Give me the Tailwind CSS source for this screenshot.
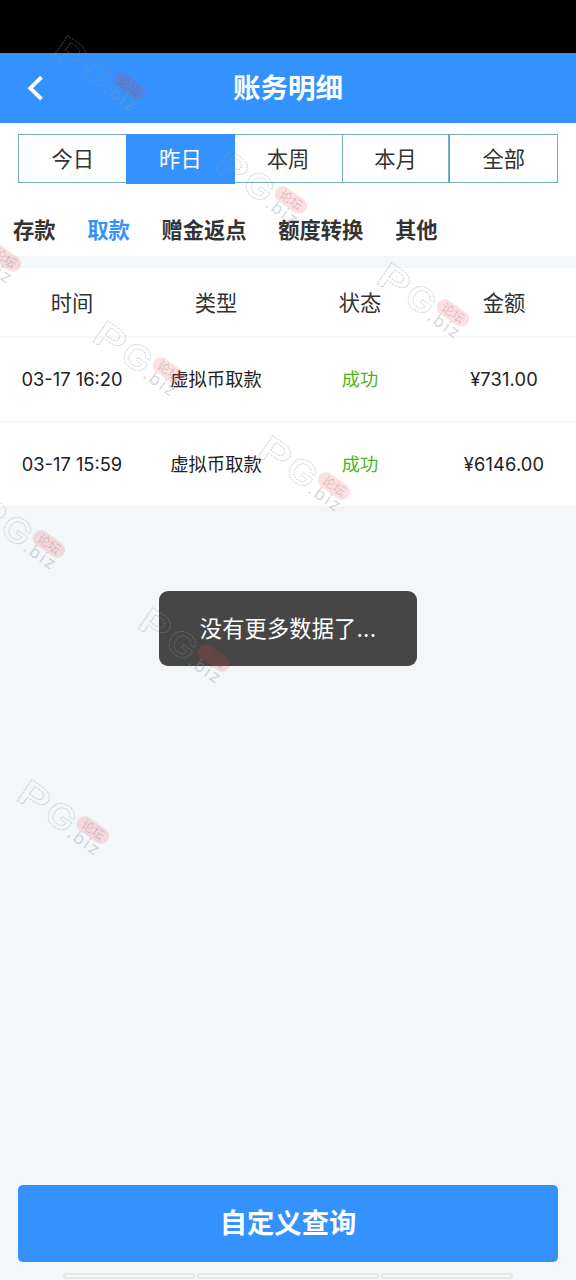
<!DOCTYPE html>
<html lang="zh-CN">
<head>
<meta charset="utf-8">
<title>账务明细</title>
<script src="https://cdn.jsdelivr.net/npm/@tailwindcss/browser@4"></script>
</head>
<body class="relative flex h-[1280px] w-[576px] flex-col overflow-hidden bg-[#f3f7fa] font-['Inter','Noto_Sans_CJK_SC',sans-serif] text-[#333]">
  <div class="h-[53px] shrink-0 bg-black"></div>
  <header class="grid h-[70px] shrink-0 grid-cols-[72px_1fr_72px] items-center bg-[#3492ff] text-white">
    <svg class="ml-[26px] h-7 w-5" viewBox="0 0 20 28" fill="none" stroke="currentColor" stroke-width="3.8"><path d="M15.5 3.2 4.3 14.2 15.5 25.2"/></svg>
    <h1 class="text-center text-[27.5px] leading-[70px] font-bold">账务明细</h1>
  </header>
  <section class="h-[133px] shrink-0 bg-white pt-[11px]">
    <nav class="mx-[18px] grid h-[49px] grid-cols-5 grid-rows-[47px] border border-[#74adc6] text-center text-[21.3px] leading-[49px]">
      <div>今日</div>
      <div class="-mt-px -mr-px -ml-px h-[50px] bg-[#3492ff] leading-[51px] text-white">昨日</div>
      <div>本周</div>
      <div class="border-x border-[#74adc6]">本月</div>
      <div class="border-l border-[#5c9fc8]">全部</div>
    </nav>
    <nav class="mt-[31px] flex gap-[31.6px] pl-[13px] text-[21.3px] leading-[32px] font-bold">
      <span>存款</span><span class="text-[#3492ff]">取款</span><span>赠金返点</span><span>额度转换</span><span>其他</span>
    </nav>
  </section>
  <section class="mt-3 shrink-0 border-b-[5px] border-[#f5f5f5] bg-white text-center">
    <div class="grid h-[70px] grid-cols-4 border-b-2 border-[#f8f8f8] text-[21.3px] leading-[70px]">
      <span>时间</span><span>类型</span><span>状态</span><span>金额</span>
    </div>
    <div class="grid h-[85px] grid-cols-4 border-b-2 border-[#f8f8f8] text-[18.3px] leading-[83px] text-[#222]">
      <span>03-17 16:20</span><span>虚拟币取款</span><span class="text-[#4cb817]">成功</span><span class="tracking-[0.15px]">¥731.00</span>
    </div>
    <div class="grid h-[83px] grid-cols-4 text-[18.3px] leading-[83px] text-[#222]">
      <span>03-17 15:59</span><span>虚拟币取款</span><span class="text-[#4cb817]">成功</span><span class="tracking-[0.15px]">¥6146.00</span>
    </div>
  </section>
  <footer class="mt-auto h-[110px] shrink-0 bg-[#f5f7f9] px-[18px] pt-[15px]">
    <button class="block h-[77px] w-full rounded-[5px] bg-[#3492ff] text-center text-[27.3px] leading-[74px] font-bold text-white">自定义查询</button>
    <div class="mx-[45px] mt-[11px] flex h-[6px] gap-[2px]">
      <i class="w-[132px] rounded-[3px] border-2 border-[#e6e8e7] bg-[#f8faf9]"></i>
      <i class="w-[183px] rounded-[3px] border-2 border-[#e6e8e7] bg-[#f8faf9]"></i>
      <i class="w-[132px] rounded-[3px] border-2 border-[#e6e8e7] bg-[#f8faf9]"></i>
    </div>
  </footer>
  <div class="absolute top-[591px] left-[159px] h-[75px] w-[258px] rounded-[9px] bg-[#464646] text-center text-[22.2px] leading-[76px] tracking-[0.2px] text-white">没有更多数据了...</div>
  <svg class="pointer-events-none absolute inset-0 h-[1280px] w-[576px]" viewBox="0 0 576 1280">
    <defs>
      <g id="mark">
        <g transform="translate(16 801) rotate(35)" class="font-['Inter',sans-serif]">
          <g fill="none" stroke="#92969b" stroke-opacity=".42" stroke-width=".9" stroke-dasharray="1.7 .8" font-weight="600">
            <text transform="scale(1.4 1)" x="-2" y="-1" font-size="35">P</text>
            <text transform="scale(1.15 1)" x="27" y="-1" font-size="34">G</text>
          </g>
          <text x="61" y="0" font-size="17" font-weight="400" fill="#92969b" fill-opacity=".38" textLength="35">.biz</text>
        </g>
        <g transform="translate(93 830) rotate(35)">
          <rect x="-18" y="-8" width="36" height="16" rx="8" fill="#f03f45" fill-opacity=".17"/>
          <text y="4.5" text-anchor="middle" font-size="12.5" fill="#70555a" fill-opacity=".25" class="font-['Noto_Sans_CJK_SC',sans-serif]">论坛</text>
        </g>
      </g>
    </defs>
    <use href="#mark" x="36" y="-744"/>
    <use href="#mark" x="198" y="-630"/>
    <use href="#mark" x="-88" y="-572"/>
    <use href="#mark" x="360" y="-517"/>
    <use href="#mark" x="76" y="-459"/>
    <use href="#mark" x="241" y="-344"/>
    <use href="#mark" x="-44" y="-286"/>
    <use href="#mark" x="121" y="-172"/>
    <use href="#mark"/>
  </svg>
</body>
</html>
